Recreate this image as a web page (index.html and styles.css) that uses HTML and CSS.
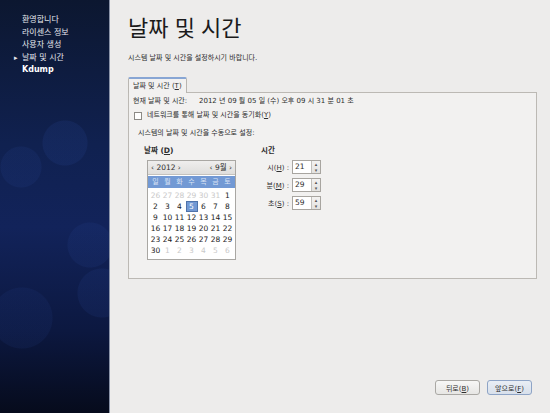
FILE: index.html
```html
<!DOCTYPE html>
<html lang="ko">
<head>
<meta charset="utf-8">
<link rel="stylesheet" href="styles.css">
</head>
<body>
<div class="app">
  <aside class="side">
    <ul class="steps">
      <li>환영합니다</li>
      <li>라이센스 정보</li>
      <li>사용자 생성</li>
      <li class="current">날짜 및 시간</li>
      <li class="strong">Kdump</li>
    </ul>
  </aside>
  <main class="main">
    <h1 class="title">날짜 및 시간</h1>
    <p class="subtitle">시스템 날짜 및 시간을 설정하시기 바랍니다.</p>
    <div class="tabs"><div class="tab">날짜 및 시간 (<u>T</u>)</div></div>
    <div class="panel">
      <div class="now"><span class="now-label">현재 날짜 및 시간:</span><span>2012 년 09 월 05 일 (수) 오후 09 시 31 분 01 초</span></div>
      <label class="sync"><span class="check"></span>네트워크를 통해 날짜 및 시간을 동기화(<u>Y</u>)</label>
      <div class="manual">
        <div class="manual-label">시스템의 날짜 및 시간을 수동으로 설정:</div>
        <div class="cols">
          <div class="date-col">
            <div class="head">날짜 (<u>D</u>)</div>
            <div class="cal">
              <div class="cal-nav">
                <span>‹ 2012 ›</span>
                <span>‹ 9월 ›</span>
              </div>
              <div class="cal-days">
                <span>일</span><span>월</span><span>화</span><span>수</span><span>목</span><span>금</span><span>토</span>
              </div>
              <div class="cal-grid">
                <span class="other">26</span><span class="other">27</span><span class="other">28</span><span class="other">29</span><span class="other">30</span><span class="other">31</span><span>1</span>
                <span>2</span><span>3</span><span>4</span><span class="sel">5</span><span>6</span><span>7</span><span>8</span>
                <span>9</span><span>10</span><span>11</span><span>12</span><span>13</span><span>14</span><span>15</span>
                <span>16</span><span>17</span><span>18</span><span>19</span><span>20</span><span>21</span><span>22</span>
                <span>23</span><span>24</span><span>25</span><span>26</span><span>27</span><span>28</span><span>29</span>
                <span>30</span><span class="other">1</span><span class="other">2</span><span class="other">3</span><span class="other">4</span><span class="other">5</span><span class="other">6</span>
              </div>
            </div>
          </div>
          <div class="time-col">
            <div class="head">시간</div>
            <div class="spins">
              <div class="spin-row"><span class="spin-label">시(<u>H</u>) :</span><span class="spin"><span class="spin-val">21</span><span class="spin-btns"><span>▴</span><span>▾</span></span></span></div>
              <div class="spin-row"><span class="spin-label">분(<u>M</u>) :</span><span class="spin"><span class="spin-val">29</span><span class="spin-btns"><span>▴</span><span>▾</span></span></span></div>
              <div class="spin-row"><span class="spin-label">초(<u>S</u>) :</span><span class="spin"><span class="spin-val">59</span><span class="spin-btns"><span>▴</span><span>▾</span></span></span></div>
            </div>
          </div>
        </div>
      </div>
    </div>
    <div class="buttons">
      <button class="btn">뒤로(<u>B</u>)</button>
      <button class="btn focus">앞으로(<u>F</u>)</button>
    </div>
  </main>
</div>
</body>
</html>
```

FILE: styles.css
```css
html, body {
  margin: 0;
  padding: 0;
  width: 550px;
  height: 413px;
  overflow: hidden;
}
body {
  font-family: "DejaVu Sans", "Noto Sans CJK KR", sans-serif;
  font-size: 7.5px;
  color: #2e2e2e;
  background: #edeceb;
}
u { text-decoration: underline; }

.app {
  display: flex;
  height: 413px;
}

.side {
  width: 109px;
  flex: none;
  border-right: 1px solid #8a93a8;
  background:
    radial-gradient(circle at 65px 143px, rgba(40,70,150,0.18) 0 22px, transparent 23px),
    radial-gradient(circle at 21px 167px, rgba(40,70,150,0.15) 0 20px, transparent 21px),
    radial-gradient(circle at 90px 245px, rgba(40,70,150,0.15) 0 22px, transparent 23px),
    radial-gradient(circle at 102px 293px, rgba(40,70,150,0.15) 0 24px, transparent 25px),
    radial-gradient(circle at 22px 318px, rgba(40,70,150,0.12) 0 30px, transparent 31px),
    linear-gradient(180deg, #0c1730 0%, #102150 35%, #12235a 55%, #0c1840 80%, #060b1c 100%);
}
.steps {
  list-style: none;
  margin: 0;
  padding: 14px 0 0 22px;
}
.steps li {
  color: #e6e8ee;
  line-height: 12.5px;
  height: 12.5px;
  font-size: 8px;
  position: relative;
}
.steps li.current::before {
  content: "▸";
  position: absolute;
  left: -8px;
  font-size: 7px;
  color: #e6e8ee;
}
.steps li.strong {
  font-weight: bold;
  color: #ffffff;
}

.main {
  flex: 1;
  display: flex;
  flex-direction: column;
  padding: 0 13px 18px 18px;
}
.title {
  margin: 11px 0 0 0;
  font-size: 22px;
  font-weight: normal;
  line-height: 30px;
  color: #1a1a1a;
  font-family: "Noto Sans CJK KR", sans-serif;
}
.subtitle {
  margin: 12px 0 0 0;
  line-height: 10px;
  font-size: 7px;
}

.tabs {
  margin-top: 13px;
  display: flex;
}
.tab {
  height: 14px;
  line-height: 14px;
  padding: 0 4px;
  background: #f2f1f0;
  border: 1px solid #b9b6b1;
  border-top: 2px solid #88a6d4;
  border-bottom: none;
  border-radius: 2px 2px 0 0;
  font-size: 7px;
  position: relative;
  top: 1px;
}
.panel {
  height: 182px;
  background: #f2f1f0;
  border: 1px solid #bcb9b4;
  padding: 3px 4px 0 4px;
}
.now {
  display: flex;
  line-height: 11px;
  font-size: 7px;
}
.now-label { width: 66px; }
.sync {
  display: flex;
  align-items: center;
  line-height: 11px;
  margin-top: 3px;
  font-size: 7px;
}
.check {
  width: 6px;
  height: 6px;
  border: 1px solid #8c8a86;
  background: #fff;
  margin: 0 5px 0 1px;
}
.manual {
  padding-left: 5px;
  margin-top: 7px;
}
.manual-label {
  line-height: 11px;
  font-size: 7px;
}
.cols {
  display: flex;
  margin-top: 6px;
  padding-left: 6px;
}
.date-col { width: 117px; }
.head {
  font-weight: bold;
  line-height: 11px;
  font-size: 7.5px;
}
.cal {
  margin: 4px 0 0 3px;
  width: 87px;
  border: 1px solid #a9a7a3;
  background: #ffffff;
}
.cal-nav {
  display: flex;
  justify-content: space-between;
  height: 13px;
  line-height: 13px;
  padding: 0 3px;
  background: linear-gradient(#efeeed, #dfdedc);
  border-bottom: 1px solid #c4c2be;
  font-size: 7.5px;
}
.cal-days {
  display: grid;
  grid-template-columns: repeat(7, 12px);
  padding: 0 1.5px;
  height: 12px;
  line-height: 12px;
  margin: 1px 0 2px 0;
  background: #7299d4;
  color: #d9e3f4;
  font-size: 7px;
  text-align: center;
}
.cal-grid {
  display: grid;
  grid-template-columns: repeat(7, 12px);
  grid-auto-rows: 11px;
  padding: 0 1.5px 3px 1.5px;
  line-height: 11px;
  text-align: center;
  font-size: 7.5px;
  color: #222;
}
.cal-grid .other { color: #c9c9c9; }
.cal-grid .sel {
  background: #7299d4;
  color: #ffffff;
  outline: 1px solid #4f73aa;
  outline-offset: -1px;
}

.time-col { width: 80px; }
.spins {
  margin-top: 4px;
  display: flex;
  flex-direction: column;
  gap: 4px;
}
.spin-row {
  display: flex;
  align-items: center;
  height: 14px;
}
.spin-label {
  width: 28px;
  text-align: right;
  font-size: 7px;
  padding-right: 3px;
}
.spin {
  display: flex;
  width: 29px;
  height: 14px;
  box-sizing: border-box;
  border: 1px solid #a8a5a0;
  background: #fff;
}
.spin-val {
  flex: 1;
  line-height: 12px;
  padding-left: 2px;
  font-size: 7.5px;
}
.spin-btns {
  width: 8px;
  display: flex;
  flex-direction: column;
  border-left: 1px solid #c2c0bc;
  background: linear-gradient(#f3f2f1, #e3e2e0);
}
.spin-btns span {
  flex: 1;
  font-size: 5px;
  line-height: 6px;
  text-align: center;
  color: #555;
}

.buttons {
  margin-top: auto;
  margin-right: 5px;
  display: flex;
  justify-content: flex-end;
  gap: 7px;
}
.btn {
  width: 45px;
  height: 15px;
  padding: 0;
  font-family: "DejaVu Sans", "Noto Sans CJK KR", sans-serif;
  font-size: 7px;
  color: #2e2e2e;
  background: linear-gradient(#f7f7f6, #e7e6e4);
  border: 1px solid #aaa8a4;
  border-radius: 3px;
}
.btn.focus {
  background: linear-gradient(#e9eef5, #d8e0eb);
  border-color: #8ea4c6;
}
```
